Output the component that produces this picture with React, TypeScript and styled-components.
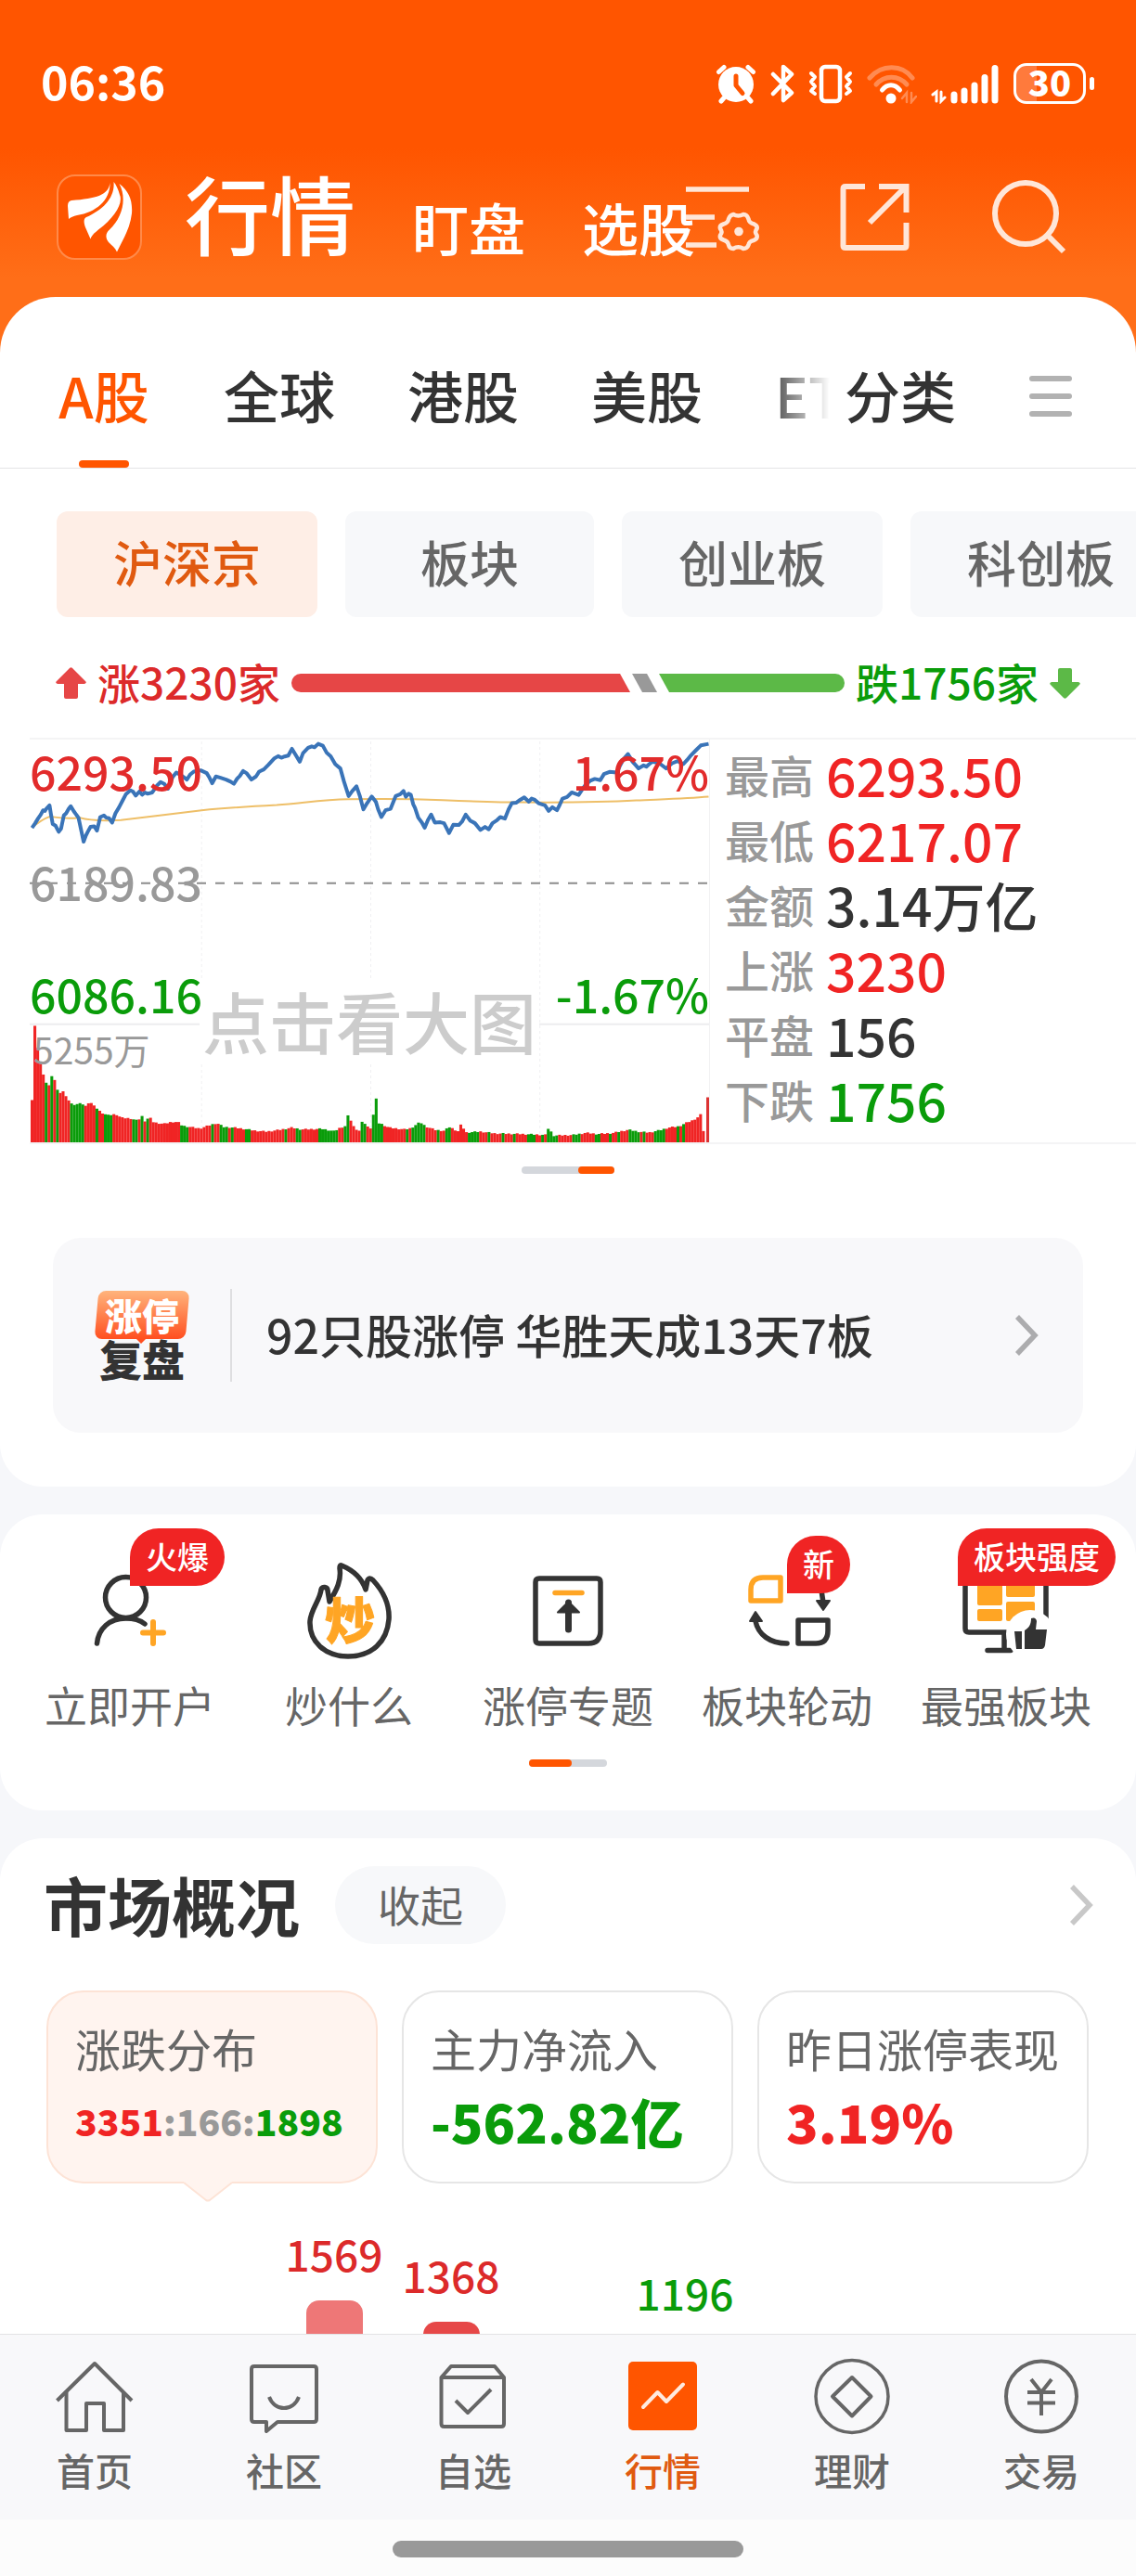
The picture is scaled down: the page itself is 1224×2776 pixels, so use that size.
import React from "react";
import styled, { createGlobalStyle, css } from "styled-components";

const c = {
  brand: "#ff5500",
  brandText: "#e05a10",
  red: "#f02424",
  redSoft: "#e64646",
  green: "#0a9c0a",
  greenSoft: "#5cb947",
  ink: "#333333",
  mid: "#666666",
  dim: "#999999",
  page: "#f6f7fa",
  soft: "#f7f8fa",
  line: "#e4e4e6",
  amber: "#ffa524",
};

const Global = createGlobalStyle`
  * { box-sizing: border-box; }
  body {
    margin: 0;
    background: ${c.page};
    font-family: "Noto Sans CJK SC", sans-serif;
    font-weight: 500;
    color: ${c.ink};
  }
  button {
    margin: 0;
    padding: 0;
    border: 0;
    background: none;
    color: inherit;
    font: inherit;
    cursor: pointer;
  }
  a { color: inherit; text-decoration: none; }
  h1, h2, p, ul, dl, dt, dd { margin: 0; padding: 0; font-weight: inherit; }
  ul { list-style: none; }
  svg { display: block; flex: none; }
`;

const Screen = styled.div`
  display: flex;
  flex-direction: column;
  height: 100vh;
  overflow: hidden;
`;

const Scroll = styled.main`
  flex: 1;
  min-height: 0;
  display: flex;
  flex-direction: column;
  gap: 30px;
  overflow: hidden;
  background:
    linear-gradient(to bottom, ${c.brand} 160px, #ff6e18 300px, #ff6e18) top / 100% 400px no-repeat,
    ${c.page};
`;

/* ---------- status bar ---------- */

const StatusBar = styled.div`
  display: flex;
  align-items: center;
  justify-content: space-between;
  height: 176px;
  padding: 4px 44px 0;
  color: #fff;
`;

const Clock = styled.time`
  font-size: 50px;
  line-height: 60px;
  padding-bottom: 8px;
  font-weight: 700;
`;

const StatusIcons = styled.div`
  display: flex;
  align-items: center;
  gap: 15px;
`;

const Battery = styled.span`
  position: relative;
  display: flex;
  align-items: center;
  justify-content: center;
  width: 78px;
  height: 44px;
  margin-right: 10px;
  border: 3px solid #fff;
  border-radius: 14px;
  background: linear-gradient(to right, #ff7a3c 30%, transparent 30%);
  font-size: 38px;
  line-height: 38px;
  font-weight: 900;
  padding-bottom: 4px;

  &::after {
    content: "";
    position: absolute;
    right: -12px;
    top: 12px;
    width: 5px;
    height: 14px;
    border-radius: 3px;
    background: #fff;
  }
`;

/* ---------- title row ---------- */

const TitleRow = styled.header`
  display: flex;
  align-items: center;
  height: 144px;
  padding: 0 75px 28px 61px;
`;

const Logo = styled.a`
  flex: none;
  width: 92px;
  height: 92px;
  border: 2px solid #ff8a4a;
  border-radius: 20px;
  background: ${c.brand};
`;

const TitleTabs = styled.nav`
  flex: 1;
  min-width: 0;
  display: flex;
  align-items: flex-end;
  gap: 61px;
  margin-left: 46px;
  padding-bottom: 13px;
  white-space: nowrap;
  color: #fff;
`;

const TitleTab = styled.button<{ $active?: boolean }>`
  flex: none;
  font-size: ${(p) => (p.$active ? 92 : 61)}px;
  line-height: ${(p) => (p.$active ? 100 : 66)}px;
`;

const Actions = styled.div`
  flex: none;
  display: flex;
  gap: 85px;
  color: #ffe6d8;
`;

/* ---------- panels ---------- */

const Panel = styled.section<{ $open?: boolean }>`
  flex: none;
  background: #fff;
  border-radius: 46px;
  ${(p) =>
    p.$open &&
    css`
      flex: 1 0 0;
      min-height: 0;
      display: flex;
      flex-direction: column;
      overflow: hidden;
      border-radius: 46px 46px 0 0;
    `}
`;

const MarketPanel = styled(Panel)`
  padding-bottom: 58px;
  border-radius: 60px 60px 46px 46px;
`;

const MarketTabs = styled.nav`
  display: flex;
  height: 185px;
  padding: 0 68px 0 61px;
  border-bottom: 1px solid ${c.line};
  font-size: 60px;
  white-space: nowrap;
`;

const TabScroller = styled.div`
  flex: 1;
  min-width: 0;
  display: flex;
  gap: 78px;
  overflow: hidden;
  mask-image: linear-gradient(to right, #000 calc(100% - 70px), transparent);
`;

const MarketTab = styled.button<{ $active?: boolean }>`
  position: relative;
  flex: none;
  min-width: 102px;
  padding-top: 24px;
  ${(p) =>
    p.$active &&
    css`
      color: ${c.brand};
      &::after {
        content: "";
        position: absolute;
        left: calc(50% - 27px);
        bottom: 0;
        width: 54px;
        height: 8px;
        border-radius: 4px;
        background: ${c.brand};
      }
    `}
`;

const CategoryTab = styled(MarketTab)`
  margin: 0 78px 0 16px;
`;

const MenuButton = styled.button`
  padding-top: 30px;
  color: #b2b2b2;
`;

const Chips = styled.div`
  display: flex;
  gap: 30px;
  padding: 46px 0 0 61px;
  overflow: hidden;
`;

const Chip = styled.button<{ $active?: boolean }>`
  flex: none;
  min-width: 268px;
  height: 114px;
  padding: 0 61px 6px;
  border-radius: 12px;
  background: ${(p) => (p.$active ? "#feeee6" : c.soft)};
  color: ${(p) => (p.$active ? c.brandText : c.mid)};
  font-size: 53px;
`;

const Ratio = styled.div`
  display: flex;
  align-items: center;
  gap: 12px;
  margin: 41px 60px 29px;
  height: 60px;
`;

const RatioText = styled.span<{ $tone: string }>`
  font-size: 46px;
  line-height: 60px;
  padding-bottom: 4px;
  color: ${(p) => p.$tone};
  white-space: nowrap;
`;

const RatioBar = styled.div`
  flex: 1;
  display: flex;
  gap: 2px;
  height: 20px;
`;

const RatioPart = styled.span<{ $grow: number; $tone: string; $edge?: "start" | "end" }>`
  flex: ${(p) => p.$grow} 1 0;
  min-width: 27px;
  background: ${(p) => p.$tone};
  clip-path: ${(p) =>
    p.$edge === "start"
      ? "polygon(0 0, calc(100% - 11px) 0, 100% 100%, 0 100%)"
      : p.$edge === "end"
        ? "polygon(0 0, 100% 0, 100% 100%, 11px 100%)"
        : "polygon(0 0, 16px 0, 27px 100%, 11px 100%)"};
  border-radius: ${(p) =>
    p.$edge === "start" ? "10px 0 0 10px" : p.$edge === "end" ? "0 10px 10px 0" : "0"};
`;

/* ---------- index chart ---------- */

const IndexBlock = styled.div`
  display: grid;
  grid-template-columns: minmax(0, 733fr) minmax(0, 459fr);
  margin-left: 32px;
  border-top: 2px solid #f4f4f5;
  border-bottom: 2px solid #f4f4f5;
`;

const ChartArea = styled.div`
  position: relative;
  height: 434px;
  border-right: 1px solid #f1f1f3;
`;

const ChartSvg = styled.svg`
  width: 100%;
  height: 100%;
`;

const ChartLabel = styled.span<{ $top: number; $tone: string; $right?: boolean; $small?: boolean }>`
  position: absolute;
  top: ${(p) => p.$top}px;
  ${(p) => (p.$right ? "right: 0;" : p.$small ? "left: 4px;" : "left: 0;")}
  color: ${(p) => p.$tone};
  font-size: ${(p) => (p.$small ? 39 : 50)}px;
  line-height: 60px;
  font-weight: ${(p) => (p.$small ? 400 : 500)};
`;

const ZoomHint = styled.button`
  position: absolute;
  top: 258px;
  left: 25%;
  width: 50%;
  padding-bottom: 4px;
  background: #fff;
  color: #cccccc;
  font-size: 72px;
  line-height: 88px;
  white-space: nowrap;
`;

const Stats = styled.dl`
  display: grid;
  grid-auto-rows: 70px;
  align-content: start;
  padding: 2px 0 0 16px;
`;

const Stat = styled.div`
  display: flex;
  align-items: center;
  gap: 13px;
  white-space: nowrap;
`;

const StatName = styled.dt`
  color: ${c.dim};
  font-size: 48px;
  line-height: 70px;
`;

const StatValue = styled.dd<{ $tone: string }>`
  color: ${(p) => p.$tone};
  font-size: 57px;
  line-height: 70px;
`;

const Pager = styled.div<{ $top: number; $width: number; $start: number; $end: number }>`
  width: ${(p) => p.$width}px;
  height: 8px;
  margin: ${(p) => p.$top}px auto 0;
  border-radius: 4px;
  background: #d4d7dc;
  &::before {
    content: "";
    display: block;
    height: 8px;
    margin-left: ${(p) => p.$start}%;
    width: ${(p) => p.$end - p.$start}%;
    border-radius: 4px;
    background: ${c.brand};
  }
`;

/* ---------- limit-up banner ---------- */

const Banner = styled.a`
  display: flex;
  align-items: center;
  height: 210px;
  margin: 69px 57px 0;
  padding: 0 48px 0 45px;
  border-radius: 30px;
  background: #f8f8fa;
`;

const ReviewMark = styled.span`
  display: flex;
  flex-direction: column;
  align-items: center;
  gap: 2px;
  width: 102px;
  padding-bottom: 6px;
  font-weight: 900;
`;

const ReviewTop = styled.span`
  position: relative;
  z-index: 0;
  width: 102px;
  color: #fff;
  font-size: 40px;
  line-height: 52px;
  text-align: center;
  &::before {
    content: "";
    position: absolute;
    z-index: -1;
    inset: 0 2px;
    border-radius: 8px;
    background: linear-gradient(#ffb47c, #ff4f20);
    transform: skewX(-5deg);
  }
  &::after {
    content: "";
    position: absolute;
    left: 45px;
    bottom: -5px;
    border: 5px solid transparent;
    border-top-color: #ff4f20;
    border-bottom: 0;
  }
`;

const ReviewBottom = styled.span`
  font-size: 46px;
  line-height: 36px;
`;

const BannerText = styled.span`
  flex: 1;
  margin-left: 44px;
  padding: 12px 0 16px 37px;
  border-left: 2px solid #dedee0;
  font-size: 50px;
  line-height: 72px;
`;

/* ---------- shortcuts ---------- */

const ShortcutPanel = styled(Panel)`
  padding: 51px 22px 47px;
`;

const Shortcuts = styled.nav`
  display: grid;
  grid-template-columns: repeat(5, 1fr);
`;

const Shortcut = styled.a`
  display: flex;
  flex-direction: column;
  align-items: center;
  gap: 17px;
  color: ${c.mid};
  font-size: 46px;
  line-height: 60px;
  font-weight: 400;
  white-space: nowrap;
`;

const ShortcutIcon = styled.span`
  position: relative;
  width: 106px;
  height: 106px;
`;

const Flag = styled.span<{ $left: number; $top: number }>`
  position: absolute;
  left: ${(p) => p.$left}px;
  top: ${(p) => p.$top}px;
  height: 62px;
  padding: 0 17px;
  border-radius: 31px 31px 31px 0;
  background: ${c.red};
  color: #fff;
  font-size: 34px;
  line-height: 60px;
  font-weight: 500;
`;

/* ---------- overview ---------- */

const OverviewHead = styled.div`
  display: flex;
  align-items: center;
  padding: 30px 46px 0 47px;
`;

const OverviewTitle = styled.h2`
  font-size: 69px;
  line-height: 82px;
  padding-bottom: 2px;
  font-weight: 700;
`;

const FoldButton = styled.button`
  height: 84px;
  margin: 0 auto 0 38px;
  padding: 0 46px 4px;
  border-radius: 42px;
  background: ${c.soft};
  color: ${c.mid};
  font-size: 46px;
  font-weight: 400;
`;

const Cards = styled.div`
  display: grid;
  grid-template-columns: repeat(3, 1fr);
  gap: 26px;
  padding: 50px 51px 0 50px;
`;

const Card = styled.button<{ $active?: boolean }>`
  position: relative;
  height: 208px;
  padding: 4px 0 0 29px;
  border: 2px solid ${(p) => (p.$active ? "#fde3d6" : "#e6e6e6")};
  border-radius: 40px;
  background: ${(p) => (p.$active ? "#fff4ef" : "#fff")};
  text-align: left;
  white-space: nowrap;
`;

const CardTail = styled.svg`
  position: absolute;
  top: 204px;
  left: 146px;
`;

const CardName = styled.span`
  display: block;
  margin-bottom: 4px;
  color: ${c.mid};
  font-size: 49px;
  line-height: 64px;
  font-weight: 400;
`;

const CardValue = styled.span<{ $tone: string; $small?: boolean }>`
  display: block;
  color: ${(p) => p.$tone};
  font-size: ${(p) => (p.$small ? 39 : 57)}px;
  line-height: 84px;
  font-weight: 900;
`;

const Tone = styled.span<{ $tone: string }>`
  color: ${(p) => p.$tone};
`;

const Distribution = styled.div`
  flex: 1;
  min-height: 0;
  overflow: hidden;
  padding: 0 45px;
`;

const DistributionGrid = styled.div`
  display: grid;
  grid-template-columns: repeat(9, 1fr);
  align-items: end;
  height: 306px;
`;

const Column = styled.div<{ $slot: number; $tone: string }>`
  grid-column: ${(p) => p.$slot};
  grid-row: 1;
  display: flex;
  flex-direction: column;
  align-items: center;
  gap: 21px;
  color: ${(p) => p.$tone};
  font-size: 46px;
  line-height: 60px;
`;

const ColumnBar = styled.span<{ $tone: string }>`
  width: 61px;
  border-radius: 14px 14px 0 0;
  background: ${(p) => p.$tone};
`;

/* ---------- bottom bar ---------- */

const BottomNav = styled.nav`
  flex: none;
  display: grid;
  grid-template-columns: repeat(6, 1fr);
  height: 200px;
  padding-top: 24px;
  border-top: 1px solid #e2e2e4;
  background: #f8f8fa;
`;

const NavItem = styled.a<{ $active?: boolean }>`
  display: flex;
  flex-direction: column;
  align-items: center;
  gap: 12px;
  color: ${(p) => (p.$active ? c.brandText : c.mid)};
  font-size: 41px;
  line-height: 50px;
`;

const HomeIndicator = styled.div`
  flex: none;
  display: flex;
  justify-content: center;
  height: 61px;
  padding-top: 23px;
  background: #fcfcfc;
  &::before {
    content: "";
    width: 378px;
    height: 18px;
    border-radius: 9px;
    background: ${c.dim};
  }
`;

/* ---------- data ---------- */

const price =
  "69,365 76,350 82,335 88,322 93,308 97,310 100,303 107,292 110,320 114,353 120,358 127,378 132,368 138,325 143,318 149,302 153,295 160,312 165,322 170,333 175,368 181,410 186,390 190,378 196,362 204,360 210,374 217,330 225,325 230,332 236,334 243,348 250,318 258,298 266,275 273,255 282,243 288,247 294,260 302,247 308,257 314,250 320,254 330,250 340,228 348,216 356,222 364,238 374,200 382,185 390,192 398,200 405,208 412,192 420,182 435,178 448,187 454,202 460,220 468,198 478,202 490,208 500,215 507,222 514,205 520,196 527,180 535,188 545,208 555,198 562,182 572,175 582,160 594,140 603,132 610,137 617,133 625,130 633,108 641,128 650,150 657,122 668,105 676,100 682,103 690,92 700,98 708,120 717,132 727,158 738,172 746,215 756,262 764,245 773,230 780,260 788,305 796,285 806,263 815,280 820,305 827,330 836,308 847,303 858,262 868,256 875,245 880,264 886,254 891,258 896,288 900,300 907,332 915,348 921,365 928,340 935,322 943,348 955,347 963,350 974,382 983,355 995,356 1002,345 1010,322 1020,342 1030,350 1042,372 1052,362 1060,370 1068,350 1078,340 1085,330 1095,335 1103,305 1110,285 1120,283 1128,274 1137,266 1147,280 1153,270 1160,274 1168,285 1182,292 1190,310 1198,298 1208,308 1214,290 1220,270 1230,265 1240,250 1255,258 1262,242 1270,225 1280,212 1290,206 1302,210 1310,190 1322,183 1338,185 1344,165 1352,142 1362,125 1372,150 1378,160 1385,172 1396,162 1402,166 1408,158 1415,150 1430,155 1445,172 1452,162 1458,155 1470,148 1482,158 1490,145 1497,132 1510,112 1520,97 1537,92";
const average =
  "M69 365C80 350 95 335 108 328C125 332 140 338 172 332C190 340 225 343 262 340C320 330 380 318 437 308C500 299 550 295 600 291C660 284 700 273 755 272C830 270 900 271 960 275C1030 279 1090 282 1130 282C1220 283 1320 281 1380 276C1440 272 1490 270 1537 264";

const volumeShape: [number, number][] = [
  [66, 138], [72, 382], [79, 300], [85, 257], [91, 218], [97, 193], [104, 185], [111, 230], [117, 190],
  [123, 163], [130, 160], [136, 172], [142, 135], [148, 138], [154, 120], [170, 128], [184, 118], [191, 133],
  [197, 125], [204, 116], [210, 105], [219, 96], [230, 88], [248, 92], [260, 80], [280, 78], [296, 70],
  [303, 86], [309, 68], [321, 82], [330, 65], [352, 60], [370, 67], [383, 66], [392, 54], [430, 45],
  [450, 55], [467, 63], [482, 50], [505, 48], [530, 43], [550, 38], [575, 35], [605, 41], [630, 48],
  [650, 42], [695, 44], [722, 36], [735, 48], [748, 54], [754, 88], [761, 56], [775, 35], [785, 67],
  [798, 44], [804, 52], [810, 143], [816, 64], [824, 60], [840, 48], [875, 42], [888, 46], [908, 66],
  [920, 52], [942, 40], [960, 38], [972, 50], [990, 36], [999, 58], [1006, 32], [1040, 35], [1070, 29],
  [1130, 27], [1182, 24], [1189, 44], [1196, 22], [1240, 24], [1268, 31], [1292, 27], [1325, 30],
  [1360, 41], [1385, 34], [1405, 32], [1430, 40], [1447, 48], [1470, 52], [1483, 62], [1500, 72],
  [1513, 84], [1519, 98], [1524, 12], [1530, 12],
];

const greenSpans: [number, number][] = [
  [95, 101], [109, 115], [122, 128], [152, 183], [208, 213], [226, 243], [286, 296], [305, 309], [318, 325],
  [344, 349], [362, 367], [387, 410], [436, 441], [448, 453], [458, 464], [474, 496], [502, 508], [532, 544],
  [558, 563], [618, 624], [632, 637], [642, 650], [656, 660], [668, 672], [692, 732], [744, 759], [778, 791],
  [807, 830], [880, 886], [892, 922], [946, 951], [964, 975], [1012, 1040], [1056, 1061], [1088, 1093],
  [1110, 1115], [1143, 1162], [1170, 1178], [1186, 1210], [1238, 1256], [1290, 1302], [1318, 1323],
  [1340, 1345], [1362, 1388], [1396, 1401], [1418, 1441], [1466, 1471], [1480, 1485],
];

const heightAt = (x: number) => {
  for (let i = 1; i < volumeShape.length; i++) {
    const [x1, h1] = volumeShape[i];
    const [x0, h0] = volumeShape[i - 1];
    if (x <= x1) return h0 + ((h1 - h0) * (x - x0)) / (x1 - x0);
  }
  return 12;
};

const peaks = [303, 754, 785, 810, 999, 1189];

const volumes = Array.from({ length: 239 }, (_, i) => {
  const x = 66 + i * 6.12;
  const peak = peaks.find((p) => p - x > -3.06 && p - x <= 3.06);
  const wobble = i > 22 && i < 236 ? ((i * 7) % 5) - 2 : 0;
  return {
    x,
    h: peak ? heightAt(peak) : heightAt(x) + wobble,
    up: !greenSpans.some(([a, b]) => x + 2 >= a && x + 2 <= b),
  };
});

const stats = [
  { name: "最高", value: "6293.50", tone: c.red },
  { name: "最低", value: "6217.07", tone: c.red },
  { name: "金额", value: "3.14万亿", tone: c.ink },
  { name: "上涨", value: "3230", tone: c.red },
  { name: "平盘", value: "156", tone: c.ink },
  { name: "下跌", value: "1756", tone: c.green },
];

const columns = [
  { slot: 3, count: 1569, text: "#dc2a2a", bar: "#ee7777" },
  { slot: 4, count: 1368, text: "#dc2a2a", bar: "#e64848" },
  { slot: 6, count: 1196, text: c.green, bar: "#7cc66c" },
];

/* ---------- icons ---------- */

const AlarmIcon = () => (
  <svg width="44" height="44" viewBox="0 0 44 44" fill="none" strokeLinecap="round">
    <circle cx="22" cy="23" r="19" fill="#fff" />
    <path d="M3.500 9.500 9 4.500M40.500 9.500 35 4.500M9 37.500 6 41M35 37.500 38 41" stroke="#fff" strokeWidth="5" />
    <path d="M22 14v10l7 8.500" stroke={c.brand} strokeWidth="5" strokeLinejoin="round" />
  </svg>
);

const BluetoothIcon = () => (
  <svg width="26" height="44" viewBox="0 0 26 44" fill="none" stroke="#fff" strokeWidth="4.500" strokeLinecap="round" strokeLinejoin="round">
    <path d="M3 12 23 32 14 40V4L23 12 3 33" />
  </svg>
);

const VibrateIcon = () => (
  <svg width="48" height="44" viewBox="0 0 48 44" fill="none" stroke="#fff" strokeLinecap="round" strokeLinejoin="round">
    <rect x="14" y="4" width="20" height="37" rx="4" strokeWidth="4.500" />
    <path d="M3 11 7 15 3 20 7 25 3 30 7 33M45 11 41 15 45 20 41 25 45 30 41 33" strokeWidth="4" />
  </svg>
);

const WifiIcon = () => (
  <svg width="54" height="44" viewBox="0 0 54 44" fill="none" stroke="#fff" strokeWidth="5" strokeLinecap="round">
    <path d="M3 16C16 1 38 1 49 16" opacity=".32" />
    <path d="M10 23C19 12.500 34 12.500 43 23" opacity=".32" />
    <path d="M16.500 29C22 22 30 22 35.500 29" />
    <circle cx="26" cy="38" r="5.500" fill="#fff" stroke="none" />
    <path d="M38 38 43 32V42M48 32V42L53 36" strokeWidth="2.500" opacity=".32" />
  </svg>
);

const SignalIcon = () => (
  <svg width="74" height="44" viewBox="0 0 74 44" stroke="#fff" fill="none" strokeLinecap="round">
    <path d="M2 34 6 31V41M11 31V41L15 37" strokeWidth="3" />
    <path d="M25 34V40M36 30V40M47 24V40M58 15.500V40M69 5.500V40" strokeWidth="7" />
  </svg>
);

const LogoMark = () => (
  <svg width="88" height="88" viewBox="2 2 88 88" fill="#fff">
    <path d="M57.500 9C56 22 43 26 16 28 13 28.500 12 31 12 34L13 48C15 46 18 45 22 44 42 41 58 28 57.500 9Z" />
    <path d="M61.500 8C63 25 50 38 32 46 29 47.500 29 51 31 57L36.500 69.500C38 65 41 63 45 59.500 62 47 72 31 68 22 66.500 16 64 11 61.500 8Z" />
    <path d="M67.500 10C78 18 82 28 81 42 79 59 71 71 65 83.500 63 79 60 77 56 73 52 68 53 63 57 59.500 71 46 76 26 67.500 10Z" />
  </svg>
);

const SettingsIcon = () => (
  <svg width="80" height="80" viewBox="0 0 80 80" fill="none" stroke="currentColor" strokeWidth="5">
    <path d="M0 10H68M0 40H31M0 70H33" strokeWidth="5.500" />
    <path d="M51 37q5.500 3 11 0q4 0 5.500 5q.5 4 6 5.500q4 2 3 5q-3 3.500 0 7q1 4-3.500 5.500q-5 1-5.500 5q-1.500 4-5.500 4q-5.500-3.500-11 0q-4 0-5-4q-.5-4-5.500-5.500q-4.500-1.500-3.500-5q3-3.500 0-7q-1-3.500 3.500-5q5-1.500 5.500-5.500q1.500-4.500 5.500-5Z" strokeWidth="4.500" strokeLinejoin="round" />
    <circle cx="57" cy="55.500" r="4.800" fill="currentColor" stroke="none" />
  </svg>
);

const ShareIcon = () => (
  <svg width="80" height="80" viewBox="0 0 80 80" fill="none" stroke="currentColor" strokeWidth="6">
    <path d="M28 7H7Q4.500 7 4.500 9.500V71Q4.500 73 7 73H70Q72.500 73 72.500 70.500V46" />
    <path d="M43 7H72.500V35M70 9 33 46" />
  </svg>
);

const SearchIcon = () => (
  <svg width="80" height="80" viewBox="0 0 80 80" fill="none" stroke="currentColor" strokeWidth="6">
    <circle cx="36" cy="36" r="33" />
    <path d="M60 60 77 77" />
  </svg>
);

const MenuIcon = () => (
  <svg width="48" height="48" viewBox="0 0 48 48" stroke="currentColor" strokeWidth="6" strokeLinecap="round">
    <path d="M4 5H44M4 24H44M4 43H44" />
  </svg>
);

const ArrowIcon = ({ down }: { down?: boolean }) => (
  <svg width="33" height="34" viewBox="0 0 33 34" fill={down ? c.greenSoft : c.redSoft}>
    <path
      d={
        down
          ? "M9 3Q9 1 11 1H22Q24 1 24 3V16H31Q34 17 32 19L18 33Q16.500 34.500 15 33L1 19Q-1 17 2 16H9Z"
          : "M9 32Q9 34 11 34H22Q24 34 24 32V18H31Q34 17 32 15L18 1Q16.500-.5 15 1L1 15Q-1 17 2 18H9Z"
      }
    />
  </svg>
);

const ChevronIcon = ({ tone }: { tone: string }) => (
  <svg width="26" height="46" viewBox="0 0 26 46" fill="none" stroke={tone} strokeWidth="5.500">
    <path d="M3 3 22 23 3 43" />
  </svg>
);

const IconFrame = ({ children }: { children: React.ReactNode }) => (
  <svg width="106" height="106" viewBox="0 0 106 106" fill="none" stroke={c.ink} strokeWidth="5.500" strokeLinecap="round" strokeLinejoin="round">
    {children}
  </svg>
);

const AccountIcon = () => (
  <IconFrame>
    <circle cx="48.500" cy="38.500" r="22" />
    <path d="M17.500 88C19 72 31 61 48.500 61 57 61 63 62 69 67" />
    <path d="M67 76.500H89M78 65V88" stroke={c.amber} strokeWidth="6" />
  </IconFrame>
);

const FlameIcon = () => (
  <IconFrame>
    <path d="M45 4C57 9 67 18 71 30L73 20Q75 16 79 20C91 33 97 46 96 62 94 86 78 102 52 102 27 102 10 86 11 64 12 51 22 41 23 30 24 26 30 27 30 31L32 43C40 30 45 20 43 7Q43 3 45 4Z" />
    <text x="27" y="84" fontSize="54" fontWeight="900" fill={c.amber} stroke={c.amber} strokeWidth="1">
      炒
    </text>
  </IconFrame>
);

const TopicIcon = () => (
  <IconFrame>
    <path d="M22 18H84Q88 18 88 22V74Q88 88 75 88H22Q18 88 18 84V22Q18 18 22 18Z" />
    <path d="M39 33.500H68" stroke={c.amber} />
    <path d="M53.500 44V73" strokeWidth="7" />
    <path d="M53.500 43 42 54.500H65Z" fill={c.ink} strokeWidth="2" />
  </IconFrame>
);

const RotateIcon = () => (
  <IconFrame>
    <path d="M27 17H46V42H14V30Q14 17 27 17Z" stroke={c.amber} />
    <path d="M65 63H97V74Q97 88 84 88H65Z" />
    <path d="M19 64C22 79 35 88 53 88" />
    <path d="M19 54 13 64H26Z" fill={c.ink} strokeWidth="2" />
    <path d="M89 24 92 44" />
    <path d="M92 52 85 42H99Z" fill={c.ink} strokeWidth="2" />
  </IconFrame>
);

const BoardIcon = () => (
  <IconFrame>
    <path d="M13 16H92Q96 16 96 20V72Q96 76 92 76H13Q9 76 9 72V20Q9 16 13 16Z" />
    <path d="M33 95.500H58M51 78V95" />
    <g fill={c.amber} stroke="none">
      <rect x="22" y="24" width="27" height="23" rx="2" />
      <rect x="53" y="24" width="31" height="14" rx="2" />
      <rect x="22" y="51" width="27" height="13" rx="2" />
      <rect x="53" y="43" width="31" height="21" rx="2" />
    </g>
    <circle cx="79" cy="78" r="26" fill="#fff" stroke="none" />
    <path d="M62 75H70V94H64ZM73 74C78 71 80 67 80 61Q85 59 86 64L85 73H97L95 90Q94 94 91 94H73Z" fill={c.ink} stroke="none" />
  </IconFrame>
);

const NavFrame = ({ children }: { children: React.ReactNode }) => (
  <svg width="84" height="84" viewBox="0 0 84 84" fill="none" stroke={c.mid} strokeWidth="4" strokeLinejoin="round">
    {children}
  </svg>
);

const HomeIcon = () => (
  <NavFrame>
    <path d="M1.500 47 42 7 82 47" />
    <path d="M11.500 38V79H33V50H52V79H73V38" />
  </NavFrame>
);

const CommunityIcon = () => (
  <NavFrame>
    <path d="M10 10H74Q77 10 77 13V67Q77 70 74 70H35L23 80V70H10Q7 70 7 67V13Q7 10 10 10Z" />
    <path d="M26 43C32 59 52 59 58 43" />
  </NavFrame>
);

const WatchlistIcon = () => (
  <NavFrame>
    <path d="M7.500 22 18 10H65L75 22V72Q75 75 72 75H10.500Q7.500 75 7.500 72ZM7.500 22H75" />
    <path d="M23 47 36 60 61 35" />
  </NavFrame>
);

const QuotesIcon = () => (
  <NavFrame>
    <rect x="5" y="5" width="74" height="74" rx="5" fill={c.brand} stroke="none" />
    <path d="M21 54 36.500 38 46 48 64 29.500" stroke="#ffeadf" strokeWidth="4" strokeLinecap="round" />
  </NavFrame>
);

const WealthIcon = () => (
  <NavFrame>
    <circle cx="42" cy="42.500" r="39" strokeWidth="3.500" />
    <path d="M42 22 62.500 42.500 42 63.500 21 42.500Z" />
  </NavFrame>
);

const TradeIcon = () => (
  <NavFrame>
    <circle cx="42" cy="42.500" r="38" />
    <path d="M31 24 42 38 53 24M27 38H57M27 49.500H57M42 38V63" />
  </NavFrame>
);

const shortcuts = [
  { label: "立即开户", Icon: AccountIcon, flag: { text: "火爆", left: 53, top: -36 } },
  { label: "炒什么", Icon: FlameIcon },
  { label: "涨停专题", Icon: TopicIcon },
  { label: "板块轮动", Icon: RotateIcon, flag: { text: "新", left: 53, top: -28 } },
  { label: "最强板块", Icon: BoardIcon, flag: { text: "板块强度", left: 1, top: -36 } },
];

const navItems = [
  { label: "首页", Icon: HomeIcon },
  { label: "社区", Icon: CommunityIcon },
  { label: "自选", Icon: WatchlistIcon },
  { label: "行情", Icon: QuotesIcon, active: true },
  { label: "理财", Icon: WealthIcon },
  { label: "交易", Icon: TradeIcon },
];

/* ---------- sections ---------- */

const VolumeSvg = styled.svg`
  position: absolute;
  left: 0;
  bottom: 0;
  width: 100%;
  height: 127px;
  pointer-events: none;
`;

const VolumeLayer = () => (
  <VolumeSvg viewBox="64 0 1474 385" preserveAspectRatio="none">
    {volumes.map((v, i) => (
      <rect key={i} x={v.x} y={385 - v.h} width="6.200" height={v.h} fill={v.up ? "#f02424" : "#0a9c0a"} />
    ))}
    <rect x="1532" y={385 - 147} width="6" height="147" fill="#dc3232" />
  </VolumeSvg>
);

const IndexChart = () => (
  <ChartArea>
    <ChartSvg viewBox="64 78 1474 1310" preserveAspectRatio="none" fill="none">
      <g stroke="#f0f0f2" strokeWidth="1" strokeDasharray="3 3">
        <path vectorEffect="non-scaling-stroke" d="M437 84V1390M804 84V1390M1171 84V1390" />
      </g>
      <path vectorEffect="non-scaling-stroke" d="M64 1004H1538" stroke="#ededef" strokeWidth="2" />
      <path vectorEffect="non-scaling-stroke" d="M64 545H1538" stroke="#8c8c8c" strokeWidth="2" strokeDasharray="10 10" />
      <path vectorEffect="non-scaling-stroke" d={average} stroke="#eebf68" strokeWidth="2" />
      <polyline vectorEffect="non-scaling-stroke" points={price} stroke="#3a74b8" strokeWidth="4" strokeLinejoin="round" />
    </ChartSvg>
    <ZoomHint type="button">点击看大图</ZoomHint>
    <ChartLabel $top={3} $tone="#e22b2b">6293.50</ChartLabel>
    <ChartLabel $top={3} $tone="#e22b2b" $right>1.67%</ChartLabel>
    <ChartLabel $top={122} $tone={c.dim}>6189.83</ChartLabel>
    <ChartLabel $top={243} $tone={c.green}>6086.16</ChartLabel>
    <ChartLabel $top={243} $tone={c.green} $right>-1.67%</ChartLabel>
    <VolumeLayer />
    <ChartLabel $top={303} $tone={c.dim} $small>5255万</ChartLabel>
  </ChartArea>
);

export default function App() {
  return (
    <Screen>
      <Global />
      <Scroll>
        <div>
          <StatusBar>
            <Clock>06:36</Clock>
            <StatusIcons>
              <AlarmIcon />
              <BluetoothIcon />
              <VibrateIcon />
              <WifiIcon />
              <SignalIcon />
              <Battery>30</Battery>
            </StatusIcons>
          </StatusBar>

          <TitleRow>
            <Logo href="#" aria-label="首页">
              <LogoMark />
            </Logo>
            <TitleTabs>
              <TitleTab $active>行情</TitleTab>
              <TitleTab>盯盘</TitleTab>
              <TitleTab>选股</TitleTab>
            </TitleTabs>
            <Actions>
              <button aria-label="设置"><SettingsIcon /></button>
              <button aria-label="分享"><ShareIcon /></button>
              <button aria-label="搜索"><SearchIcon /></button>
            </Actions>
          </TitleRow>

          <MarketPanel>
            <MarketTabs>
              <TabScroller>
                <MarketTab $active>A股</MarketTab>
                <MarketTab>全球</MarketTab>
                <MarketTab>港股</MarketTab>
                <MarketTab>美股</MarketTab>
                <MarketTab>ETF</MarketTab>
              </TabScroller>
              <CategoryTab>分类</CategoryTab>
              <MenuButton aria-label="菜单"><MenuIcon /></MenuButton>
            </MarketTabs>

            <Chips>
              <Chip $active>沪深京</Chip>
              <Chip>板块</Chip>
              <Chip>创业板</Chip>
              <Chip>科创板</Chip>
            </Chips>

            <Ratio>
              <ArrowIcon />
              <RatioText $tone="#dc2a2a">涨3230家</RatioText>
              <RatioBar>
                <RatioPart $grow={365} $tone={c.redSoft} $edge="start" />
                <RatioPart $grow={0} $tone={c.dim} />
                <RatioPart $grow={200} $tone={c.greenSoft} $edge="end" />
              </RatioBar>
              <RatioText $tone={c.green}>跌1756家</RatioText>
              <ArrowIcon down />
            </Ratio>

            <IndexBlock>
              <IndexChart />
              <Stats>
                {stats.map((s) => (
                  <Stat key={s.name}>
                    <StatName>{s.name}</StatName>
                    <StatValue $tone={s.tone}>{s.value}</StatValue>
                  </Stat>
                ))}
              </Stats>
            </IndexBlock>
            <Pager $top={24} $width={100} $start={61} $end={100} />

            <Banner href="#">
              <ReviewMark>
                <ReviewTop>涨停</ReviewTop>
                <ReviewBottom>复盘</ReviewBottom>
              </ReviewMark>
              <BannerText>92只股涨停 华胜天成13天7板</BannerText>
              <ChevronIcon tone="#acacae" />
            </Banner>
          </MarketPanel>
        </div>

        <ShortcutPanel>
          <Shortcuts>
            {shortcuts.map(({ label, Icon, flag }) => (
              <Shortcut key={label} href="#">
                <ShortcutIcon>
                  <Icon />
                  {flag && (
                    <Flag $left={flag.left} $top={flag.top}>
                      {flag.text}
                    </Flag>
                  )}
                </ShortcutIcon>
                {label}
              </Shortcut>
            ))}
          </Shortcuts>
          <Pager $top={30} $width={84} $start={0} $end={55} />
        </ShortcutPanel>

        <Panel $open>
          <OverviewHead>
            <OverviewTitle>市场概况</OverviewTitle>
            <FoldButton>收起</FoldButton>
            <ChevronIcon tone="#c8c8c8" />
          </OverviewHead>
          <Cards>
            <Card $active>
              <CardName>涨跌分布</CardName>
              <CardValue $tone={c.dim} $small>
                <Tone $tone={c.red}>3351</Tone>:166:<Tone $tone={c.green}>1898</Tone>
              </CardValue>
              <CardTail width="52" height="22" viewBox="0 0 52 22">
                <path d="M0 0H52V2L28 20Q26 21 24 20L0 2Z" fill="#fff4ef" />
                <path d="M0 1 24 20Q26 21 28 20L52 1" fill="none" stroke="#fde3d6" strokeWidth="2" />
              </CardTail>
            </Card>
            <Card>
              <CardName>主力净流入</CardName>
              <CardValue $tone={c.green}>-562.82亿</CardValue>
            </Card>
            <Card>
              <CardName>昨日涨停表现</CardName>
              <CardValue $tone={c.red}>3.19%</CardValue>
            </Card>
          </Cards>
          <Distribution>
            <DistributionGrid>
              {columns.map((col) => (
                <Column key={col.slot} $slot={col.slot} $tone={col.text}>
                  {col.count}
                  <ColumnBar $tone={col.bar} style={{ height: Math.round(col.count * 0.115) }} />
                </Column>
              ))}
            </DistributionGrid>
          </Distribution>
        </Panel>
      </Scroll>

      <BottomNav>
        {navItems.map(({ label, Icon, active }) => (
          <NavItem key={label} href="#" $active={active}>
            <Icon />
            {label}
          </NavItem>
        ))}
      </BottomNav>
      <HomeIndicator />
    </Screen>
  );
}
